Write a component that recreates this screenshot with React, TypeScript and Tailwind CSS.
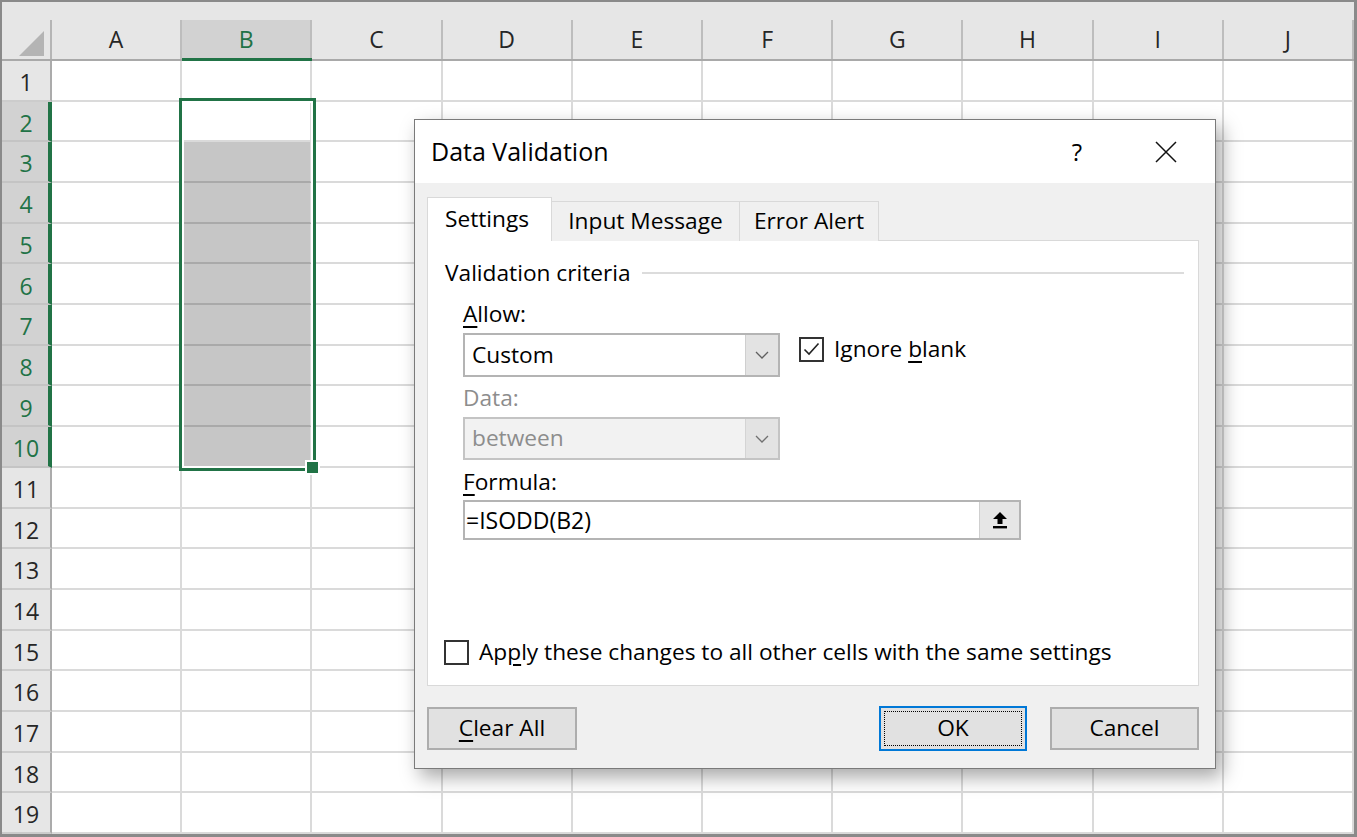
import React from 'react';

const COLS = ['A', 'B', 'C', 'D', 'E', 'F', 'G', 'H', 'I', 'J'];
const ROWS = Array.from({ length: 19 }, (_, i) => i + 1);

function Chevron({ color = '#606060' }: { color?: string }) {
  return (
    <svg width="14" height="8" viewBox="0 0 14 8" fill="none">
      <path d="M1 1 L7 7 L13 1" stroke={color} strokeWidth="1.3" />
    </svg>
  );
}

function Checkbox({ checked }: { checked?: boolean }) {
  return (
    <div className="w-[25px] h-[25px] border-2 border-[#333333] bg-white flex items-center justify-center shrink-0">
      {checked && (
        <svg width="17" height="14" viewBox="0 0 17 14" fill="none">
          <path d="M1.5 7.5 L6 12 L15.5 1.5" stroke="#222" strokeWidth="1.6" />
        </svg>
      )}
    </div>
  );
}

function Sheet() {
  return (
    <div className="grid h-full grid-cols-[50px_repeat(10,minmax(0,1fr))] grid-rows-[59px_repeat(19,minmax(0,1fr))]">
      {/* corner */}
      <div className="bg-[#e6e6e6] flex flex-col border-b-2 border-[#a9a9a9]">
        <div className="h-[18px]" />
        <div className="flex-1 border-r-2 border-[#b5b5b5] flex items-end justify-end pr-[6px] pb-[3px]">
          <svg width="25" height="25" viewBox="0 0 25 25">
            <polygon points="25,0 25,25 0,25" fill="#b4b4b4" />
          </svg>
        </div>
      </div>
      {COLS.map((c) =>
        c === 'B' ? (
          <div key={c} className="bg-[#e6e6e6] flex flex-col border-b-[3px] border-[#217346]">
            <div className="h-[18px]" />
            <div className="flex-1 bg-[#d2d2d2] border-r-2 border-[#bdbdbd] flex items-center justify-center text-[23px] text-[#217346]">
              {c}
            </div>
          </div>
        ) : (
          <div key={c} className="bg-[#e6e6e6] flex flex-col border-b-2 border-[#a9a9a9]">
            <div className="h-[18px]" />
            <div className="flex-1 border-r-2 border-[#bdbdbd] flex items-center justify-center text-[23px] text-[#262626]">
              {c}
            </div>
          </div>
        )
      )}
      {ROWS.map((r) => {
        const sel = r >= 2 && r <= 10;
        return (
          <React.Fragment key={r}>
            {sel ? (
              <div className="bg-[#d2d2d2] border-r-4 border-b-2 border-[#c4c4c4] border-r-[#217346] flex items-center justify-center pl-[2px] pt-[4px] text-[23px] text-[#217346]">
                {r}
              </div>
            ) : (
              <div className="bg-[#e6e6e6] border-r-2 border-b-2 border-[#cccccc] border-r-[#ababab] flex items-center justify-center pt-[4px] text-[23px] text-[#262626]">
                {r}
              </div>
            )}
            {COLS.map((c) =>
              c === 'B' && r >= 3 && r <= 10 ? (
                <div key={c} className="bg-[#c6c6c6] border-r-2 border-b-2 border-[#dadada] border-b-[#a9a9a9]" />
              ) : (
                <div key={c} className="bg-white border-r-2 border-b-2 border-[#dadada]" />
              )
            )}
          </React.Fragment>
        );
      })}
    </div>
  );
}

function Dialog() {
  return (
    <div className="absolute left-[412px] top-[117px] w-[802px] h-[650px] border border-[#7a7a7a] bg-[#f0f0f0] shadow-[6px_8px_18px_rgba(0,0,0,0.35)] flex flex-col text-black">
      {/* title bar */}
      <div className="h-[63px] bg-white flex items-center pl-[16px] shrink-0">
        <span className="text-[25px]">Data Validation</span>
        <span className="ml-auto text-[24px] leading-none">?</span>
        <svg className="ml-[72px] mr-[37px]" width="24" height="24" viewBox="0 0 24 24" fill="none">
          <path d="M2 2 L22 22 M22 2 L2 22" stroke="#111" strokeWidth="1.5" />
        </svg>
      </div>

      {/* body */}
      <div className="flex-1 flex flex-col pl-[12px] pr-[16px] pt-[14px] text-[22.7px]">
        {/* tabs */}
        <div className="flex items-end h-[44px] -mb-px relative z-10">
          <div className="w-[125px] h-[44px] bg-white border border-b-0 border-[#d9d9d9] flex items-center pl-[17px]">
            Settings
          </div>
          <div className="w-[188px] h-[40px] bg-[#f0f0f0] border border-l-0 border-[#d9d9d9] border-b-0 flex items-center justify-center">
            Input Message
          </div>
          <div className="w-[139px] h-[40px] bg-[#f0f0f0] border border-l-0 border-[#d9d9d9] border-b-0 flex items-center justify-center">
            Error Alert
          </div>
        </div>

        {/* panel */}
        <div className="h-[446px] bg-white border border-[#d9d9d9] flex flex-col">
          <div className="mt-[18px] h-[28px] flex items-center pl-[17px] pr-[14px]">
            <span>Validation criteria</span>
            <div className="flex-1 h-[2px] bg-[#dcdcdc] ml-[11px]" />
          </div>

          <div className="pl-[35px] flex flex-col">
            <div className="mt-[14px] h-[26px] flex items-center">
              <span><span className="underline underline-offset-[4px]">A</span>llow:</span>
            </div>
            <div className="mt-[6px] flex items-center">
              <div className="w-[317px] h-[44px] border-2 border-[#b4b4b4] bg-white flex">
                <div className="flex-1 flex items-center pl-[7px]">Custom</div>
                <div className="w-[33px] bg-[#e3e3e3] border-l border-[#cfcfcf] flex items-center justify-center">
                  <Chevron />
                </div>
              </div>
              <div className="ml-[19px] mt-[-11px] flex items-center gap-[10px]">
                <Checkbox checked />
                <span>Ignore <span className="underline underline-offset-[4px]">b</span>lank</span>
              </div>
            </div>

            <div className="mt-[8px] h-[26px] flex items-center text-[#8d8d8d]">Data:</div>
            <div className="mt-[6px] w-[317px] h-[43px] border-2 border-[#c4c4c4] bg-[#f2f2f2] flex">
              <div className="flex-1 flex items-center pl-[7px] text-[#8d8d8d]">between</div>
              <div className="w-[33px] bg-[#e3e3e3] border-l border-[#d4d4d4] flex items-center justify-center">
                <Chevron color="#707070" />
              </div>
            </div>

            <div className="mt-[9px] h-[26px] flex items-center">
              <span><span className="underline underline-offset-[4px]">F</span>ormula:</span>
            </div>
            <div className="mt-[5px] w-[558px] h-[40px] border-2 border-[#b4b4b4] bg-white flex">
              <div className="flex-1 flex items-center pl-[1px] text-[23px]">=ISODD(B2)</div>
              <div className="w-[40px] bg-[#e6e6e6] border-l border-[#cfcfcf] flex items-center justify-center">
                <svg width="16" height="18" viewBox="0 0 16 18">
                  <polygon points="8,1 15,8 10.5,8 10.5,13 5.5,13 5.5,8 1,8" fill="#000" />
                  <rect x="1" y="15" width="14" height="2.4" fill="#000" />
                </svg>
              </div>
            </div>
          </div>

          <div className="mt-[95px] pl-[16px] flex items-center gap-[10px]">
            <Checkbox />
            <span>Ap<span className="underline underline-offset-[4px]">p</span>ly these changes to all other cells with the same settings</span>
          </div>
        </div>

        {/* buttons */}
        <div className="mt-[20px] flex items-center">
          <div className="w-[150px] h-[43px] bg-[#e1e1e1] border-2 border-[#adadad] flex items-center justify-center">
            <span><span className="underline underline-offset-[4px]">C</span>lear All</span>
          </div>
          <div className="ml-auto w-[148px] h-[45px] bg-[#e1e1e1] border-2 border-[#0078d7] p-[3px]">
            <div className="w-full h-full border border-dotted border-black flex items-center justify-center">OK</div>
          </div>
          <div className="ml-[23px] w-[149px] h-[43px] bg-[#e1e1e1] border-2 border-[#adadad] flex items-center justify-center">
            Cancel
          </div>
        </div>
      </div>
    </div>
  );
}

export default function App() {
  return (
    <div className="w-[1357px] h-[837px] bg-white font-['Open_Sans',sans-serif]">
      <div className="relative w-full h-full border-t-2 border-l-2 border-r-[3px] border-b-[3px] border-[#8a8a8a] overflow-hidden">
        <Sheet />
        {/* selection around B2:B10 */}
        <div className="absolute left-[177px] top-[96px] w-[137px] h-[373px] border-[3px] border-[#217346] shadow-[inset_0_0_0_2px_#ffffff]" />
        <div className="absolute left-[303px] top-[458px] w-[15px] h-[15px] bg-[#217346] border-2 border-white" />
        <Dialog />
      </div>
    </div>
  );
}
